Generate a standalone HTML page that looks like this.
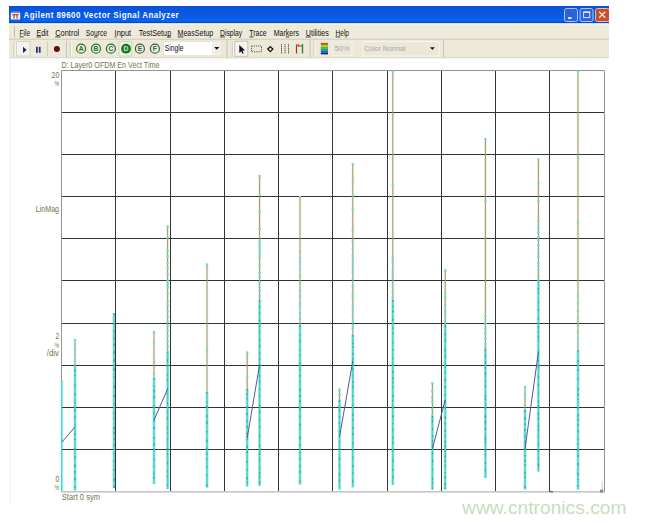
<!DOCTYPE html>
<html><head><meta charset="utf-8"><style>
html,body{margin:0;padding:0;background:#fff;width:646px;height:523px;overflow:hidden}
svg{display:block}
text{font-family:"Liberation Sans",sans-serif}
</style></head><body>
<svg width="646" height="523" viewBox="0 0 646 523">
<defs>
<linearGradient id="tb" x1="0" y1="0" x2="0" y2="1">
<stop offset="0" stop-color="#0b47c8"/>
<stop offset="0.1" stop-color="#0a54da"/>
<stop offset="0.5" stop-color="#0a58e0"/>
<stop offset="0.85" stop-color="#0a64f0"/>
<stop offset="1" stop-color="#0040b5"/>
</linearGradient>
</defs>
<rect x="0" y="0" width="646" height="523" fill="#fff"/>
<!-- title bar -->
<rect x="9" y="6" width="600" height="17.5" fill="url(#tb)"/>
<!-- app icon -->
<rect x="10.8" y="11.8" width="9.4" height="7.8" rx="1.2" fill="#f2ecec"/>
<rect x="10.8" y="11.8" width="9.4" height="1.2" fill="#6a8ad8"/>
<path d="M12.4 14 h6.2 v1.3 h-1 v3.2 h-1.2 v-3.2 h-1.8 v3.2 h-1.2 v-3.2 h-1z" fill="#b04a2c"/>
<text transform="translate(23.6,18.4) scale(0.83,1)" x="0" y="0" font-size="9.6" font-weight="bold" fill="#f4f8ff" letter-spacing="0.55">Agilent 89600 Vector Signal Analyzer</text>
<!-- caption buttons -->
<rect x="564.5" y="8.5" width="13" height="13" rx="2" fill="#2e62d6" stroke="#a8c4f8" stroke-width="1"/>
<rect x="568" y="17.2" width="3.6" height="1.7" fill="#f0f4ff"/>
<rect x="580" y="8.5" width="13" height="13" rx="2" fill="#2e62d6" stroke="#a8c4f8" stroke-width="1"/>
<rect x="583.6" y="12" width="6.2" height="5.6" fill="none" stroke="#e8eeff" stroke-width="0.9"/>
<rect x="583.4" y="11.6" width="6.6" height="1.3" fill="#e8eeff"/>
<rect x="595.5" y="8.5" width="14" height="13" rx="2" fill="#c84e2c" stroke="#e8b8a8" stroke-width="1"/>
<path d="M599.2 11.8 L605.3 17.8 M605.3 11.8 L599.2 17.8" stroke="#f4e8e4" stroke-width="1.3"/>
<rect x="609" y="6" width="37" height="20" fill="#fff"/>
<!-- menu bar -->
<rect x="9" y="23.5" width="600" height="16" fill="#eeeadb"/>
<rect x="9" y="23.5" width="600" height="1" fill="#f6f8f0"/>
<rect x="9" y="38.8" width="600" height="1" fill="#c8c4b0"/>
<rect x="14" y="26.5" width="1" height="11" fill="#c0bca8"/>
<g font-size="9.4" fill="#111"><text x="19.6" y="36" textLength="10.6" lengthAdjust="spacingAndGlyphs">File</text><rect x="19.60" y="36.5" width="4.02" height="0.9" fill="#333"/><text x="36.5" y="36" textLength="12" lengthAdjust="spacingAndGlyphs">Edit</text><rect x="36.50" y="36.5" width="4.64" height="0.9" fill="#333"/><text x="55.2" y="36" textLength="24" lengthAdjust="spacingAndGlyphs">Control</text><rect x="55.20" y="36.5" width="5.38" height="0.9" fill="#333"/><text x="85.8" y="36" textLength="21.3" lengthAdjust="spacingAndGlyphs">Source</text><rect x="94.02" y="36.5" width="3.74" height="0.9" fill="#333"/><text x="114.6" y="36" textLength="16.6" lengthAdjust="spacingAndGlyphs">Input</text><rect x="114.60" y="36.5" width="2.07" height="0.9" fill="#333"/><text x="138.8" y="36" textLength="32.4" lengthAdjust="spacingAndGlyphs">TestSetup</text><rect x="167.15" y="36.5" width="4.05" height="0.9" fill="#333"/><text x="177.6" y="36" textLength="35.6" lengthAdjust="spacingAndGlyphs">MeasSetup</text><rect x="177.60" y="36.5" width="5.86" height="0.9" fill="#333"/><text x="220" y="36" textLength="22.2" lengthAdjust="spacingAndGlyphs">Display</text><rect x="220.00" y="36.5" width="4.89" height="0.9" fill="#333"/><text x="249.3" y="36" textLength="17.4" lengthAdjust="spacingAndGlyphs">Trace</text><rect x="249.30" y="36.5" width="4.22" height="0.9" fill="#333"/><text x="273.7" y="36" textLength="25.4" lengthAdjust="spacingAndGlyphs">Markers</text><rect x="285.81" y="36.5" width="3.52" height="0.9" fill="#333"/><text x="305.8" y="36" textLength="23" lengthAdjust="spacingAndGlyphs">Utilities</text><rect x="305.80" y="36.5" width="5.15" height="0.9" fill="#333"/><text x="335.6" y="36" textLength="13.4" lengthAdjust="spacingAndGlyphs">Help</text><rect x="335.60" y="36.5" width="4.71" height="0.9" fill="#333"/></g>
<!-- toolbar band -->
<rect x="9" y="39.8" width="600" height="18.5" fill="#ece9d8"/>
<rect x="9" y="57.3" width="600" height="1" fill="#d8d4c4"/>
<!-- toolbar 1 -->
<rect x="13.5" y="41.5" width="1" height="15" fill="#c4c0ae"/>
<rect x="14.5" y="41.5" width="1" height="15" fill="#fbfaf4"/>
<rect x="16.5" y="41.5" width="13.5" height="14.5" fill="#f4f2ec" stroke="#d8d4c4" stroke-width="1"/>
<path d="M23 46.8 L26.7 49.9 L23 53 Z" fill="#1c2660"/>
<rect x="36" y="46.8" width="1.8" height="6" fill="#28307a"/>
<rect x="38.8" y="46.8" width="1.8" height="6" fill="#28307a"/>
<rect x="47" y="42" width="1" height="14" fill="#d0ccbc"/>
<circle cx="56.9" cy="49.1" r="3.0" fill="#5e0c0c"/>
<rect x="66" y="40.5" width="1" height="17" fill="#c8c4b2"/>
<!-- toolbar 2 -->
<rect x="69.8" y="41.5" width="1" height="15" fill="#c4c0ae"/>
<rect x="70.8" y="41.5" width="1" height="15" fill="#fbfaf4"/>
<g stroke="#2e6a2e" stroke-width="1.2" fill="#e4f0dc">
<circle cx="81.1" cy="48.7" r="4.5"/>
<circle cx="96" cy="48.7" r="4.5"/>
<circle cx="110.9" cy="48.7" r="4.5"/>
</g>
<rect x="118.8" y="41.5" width="12.6" height="14.5" fill="#e8f4e0" stroke="#d4d4c4" stroke-width="1"/>
<circle cx="126" cy="48.7" r="4.9" fill="#1a7424"/>
<g stroke="#3e5e3e" stroke-width="1.2" fill="#e6ece0">
<circle cx="139.9" cy="48.7" r="4.5"/>
<circle cx="154.9" cy="48.7" r="4.5"/>
</g>
<g font-size="6.8" font-weight="bold" text-anchor="middle">
<text x="81.1" y="51.2" fill="#2e6a2e">A</text>
<text x="96" y="51.2" fill="#2e6a2e">B</text>
<text x="110.9" y="51.2" fill="#2e6a2e">C</text>
<text x="126" y="51.2" fill="#c8ecc8">D</text>
<text x="139.9" y="51.2" fill="#3e5e3e">E</text>
<text x="154.9" y="51.2" fill="#3e5e3e">F</text>
</g>
<rect x="163.5" y="41.5" width="57.5" height="14" fill="#fff" stroke="#e8e6dc" stroke-width="1"/>
<rect x="212" y="42.5" width="8.5" height="12" fill="#f0eee4"/>
<text x="164.8" y="51.2" font-size="9" fill="#111" textLength="18.8" lengthAdjust="spacingAndGlyphs">Single</text>
<path d="M214.2 47 L219.4 47 L216.8 49.8 Z" fill="#111"/>
<rect x="226.5" y="40.5" width="1" height="17" fill="#c8c4b2"/>
<!-- toolbar 3 -->
<rect x="231.8" y="41.5" width="1" height="15" fill="#c4c0ae"/>
<rect x="232.8" y="41.5" width="1" height="15" fill="#fbfaf4"/>
<rect x="234.8" y="41.3" width="13" height="15" fill="#f6f4ee" stroke="#c8c4b4" stroke-width="1"/>
<path d="M239.3 45 L239.3 53 L241.2 51.2 L242.6 53.8 L243.8 53.2 L242.4 50.6 L245.2 50.4 Z" fill="#111"/>
<rect x="251.5" y="46" width="10" height="5.8" fill="none" stroke="#555" stroke-width="1" stroke-dasharray="1.2 1"/>
<path d="M270.3 46.6 L272.8 49.1 L270.3 51.6 L267.8 49.1 Z" fill="none" stroke="#111" stroke-width="1.3"/>
<g stroke="#444" stroke-width="1" stroke-dasharray="1.2 0.8">
<line x1="281.5" y1="44.2" x2="281.5" y2="53.5"/>
<line x1="285" y1="44.2" x2="285" y2="53.5"/>
<line x1="288.5" y1="44.2" x2="288.5" y2="53.5"/>
</g>
<path d="M296.5 53.5 V45 H299 V47" fill="none" stroke="#b03020" stroke-width="1.2"/>
<path d="M302.5 53.5 V45 L300.5 46.5" fill="none" stroke="#2a8a3a" stroke-width="1.4"/>
<rect x="309.5" y="40.5" width="1" height="17" fill="#c8c4b2"/>
<!-- toolbar 4 -->
<rect x="313.5" y="41.5" width="1" height="15" fill="#c4c0ae"/>
<rect x="314.5" y="41.5" width="1" height="15" fill="#fbfaf4"/>
<rect x="320.8" y="42.9" width="7.2" height="2" fill="#b05a20"/>
<rect x="320.8" y="44.9" width="7.2" height="2" fill="#c8c020"/>
<rect x="320.8" y="46.9" width="7.2" height="2" fill="#40c040"/>
<rect x="320.8" y="48.9" width="7.2" height="2" fill="#20a080"/>
<rect x="320.8" y="50.9" width="7.2" height="2" fill="#2060d0"/>
<rect x="320.8" y="52.9" width="7.2" height="1.5" fill="#102c80"/>
<rect x="332" y="42" width="20" height="13.5" fill="#ebe8da" stroke="#f4f2ea" stroke-width="1"/>
<text x="334.8" y="51.2" font-size="8" fill="#a8a69c" textLength="14.6" lengthAdjust="spacingAndGlyphs">50%</text>
<rect x="362.7" y="41.5" width="76.5" height="14.5" fill="#ebe8da" stroke="#f6f4ee" stroke-width="1"/>
<text x="364.3" y="51.2" font-size="8" fill="#a8a69c" textLength="41" lengthAdjust="spacingAndGlyphs">Color Normal</text>
<path d="M430 47.3 L434.7 47.3 L432.35 50 Z" fill="#111"/>
<rect x="443" y="40.5" width="1" height="17" fill="#c8c4b2"/>
<!-- white client -->
<rect x="9" y="58.3" width="600" height="465" fill="#fff"/>
<rect x="9.6" y="58.3" width="1" height="446" fill="#ebebeb"/>
<rect x="12.8" y="60" width="0.8" height="444" fill="#f3f3f3"/>
<rect x="10" y="58.4" width="598" height="0.8" fill="#eeeeee"/>

<!-- plot -->
<line x1="62" y1="380" x2="62" y2="491" stroke="#b0f2ee" stroke-width="2.6"/><line x1="75" y1="339" x2="75" y2="365" stroke="#f7f7e6" stroke-width="3"/><line x1="75" y1="365" x2="75" y2="490.5" stroke="#a6f0ec" stroke-width="3.2"/><line x1="114" y1="313" x2="114" y2="488" stroke="#a6f0ec" stroke-width="3.2"/><line x1="154" y1="331" x2="154" y2="378" stroke="#f7f7e6" stroke-width="3"/><line x1="154" y1="378" x2="154" y2="484" stroke="#a6f0ec" stroke-width="3.2"/><line x1="167.6" y1="225.5" x2="167.6" y2="250" stroke="#f7f7e6" stroke-width="3"/><line x1="167.6" y1="250" x2="167.6" y2="352" stroke="#f7f7e6" stroke-width="3"/><line x1="167.6" y1="352" x2="167.6" y2="489" stroke="#a6f0ec" stroke-width="3.2"/><line x1="207" y1="263.5" x2="207" y2="392" stroke="#f7f7e6" stroke-width="3"/><line x1="207" y1="392" x2="207" y2="487.5" stroke="#a6f0ec" stroke-width="3.2"/><line x1="247.2" y1="351.5" x2="247.2" y2="389" stroke="#f7f7e6" stroke-width="3"/><line x1="247.2" y1="389" x2="247.2" y2="486.5" stroke="#a6f0ec" stroke-width="3.2"/><line x1="259.6" y1="175" x2="259.6" y2="240" stroke="#f7f7e6" stroke-width="3"/><line x1="259.6" y1="240" x2="259.6" y2="300" stroke="#f7f7e6" stroke-width="3"/><line x1="259.6" y1="300" x2="259.6" y2="486" stroke="#a6f0ec" stroke-width="3.2"/><line x1="300" y1="196" x2="300" y2="250" stroke="#f7f7e6" stroke-width="3"/><line x1="300" y1="250" x2="300" y2="325" stroke="#f7f7e6" stroke-width="3"/><line x1="300" y1="325" x2="300" y2="484.5" stroke="#a6f0ec" stroke-width="3.2"/><line x1="339.5" y1="388.6" x2="339.5" y2="400" stroke="#f7f7e6" stroke-width="3"/><line x1="339.5" y1="400" x2="339.5" y2="489.5" stroke="#a6f0ec" stroke-width="3.2"/><line x1="352.8" y1="163" x2="352.8" y2="240" stroke="#f7f7e6" stroke-width="3"/><line x1="352.8" y1="240" x2="352.8" y2="335" stroke="#f7f7e6" stroke-width="3"/><line x1="352.8" y1="335" x2="352.8" y2="487.3" stroke="#a6f0ec" stroke-width="3.2"/><line x1="392.8" y1="70.5" x2="392.8" y2="258" stroke="#f7f7e6" stroke-width="3"/><line x1="392.8" y1="258" x2="392.8" y2="300" stroke="#f7f7e6" stroke-width="3"/><line x1="392.8" y1="300" x2="392.8" y2="485" stroke="#a6f0ec" stroke-width="3.2"/><line x1="432.4" y1="382" x2="432.4" y2="416" stroke="#f7f7e6" stroke-width="3"/><line x1="432.4" y1="416" x2="432.4" y2="489.6" stroke="#a6f0ec" stroke-width="3.2"/><line x1="445.2" y1="269.4" x2="445.2" y2="292" stroke="#f7f7e6" stroke-width="3"/><line x1="445.2" y1="292" x2="445.2" y2="325" stroke="#f7f7e6" stroke-width="3"/><line x1="445.2" y1="325" x2="445.2" y2="489.6" stroke="#a6f0ec" stroke-width="3.2"/><line x1="485.4" y1="138" x2="485.4" y2="315" stroke="#f7f7e6" stroke-width="3"/><line x1="485.4" y1="315" x2="485.4" y2="349" stroke="#f7f7e6" stroke-width="3"/><line x1="485.4" y1="349" x2="485.4" y2="478" stroke="#a6f0ec" stroke-width="3.2"/><line x1="525" y1="386" x2="525" y2="410" stroke="#f7f7e6" stroke-width="3"/><line x1="525" y1="410" x2="525" y2="489.5" stroke="#a6f0ec" stroke-width="3.2"/><line x1="538.4" y1="158.5" x2="538.4" y2="220" stroke="#f7f7e6" stroke-width="3"/><line x1="538.4" y1="220" x2="538.4" y2="280" stroke="#f7f7e6" stroke-width="3"/><line x1="538.4" y1="280" x2="538.4" y2="471.6" stroke="#a6f0ec" stroke-width="3.2"/><line x1="578" y1="70.5" x2="578" y2="302" stroke="#f7f7e6" stroke-width="3"/><line x1="578" y1="302" x2="578" y2="350" stroke="#f7f7e6" stroke-width="3"/><line x1="578" y1="350" x2="578" y2="489.5" stroke="#a6f0ec" stroke-width="3.2"/><g stroke="#343434" stroke-width="1"><line x1="115.5" y1="70.5" x2="115.5" y2="491.5"/><line x1="170.5" y1="70.5" x2="170.5" y2="491.5"/><line x1="224.5" y1="70.5" x2="224.5" y2="491.5"/><line x1="278.5" y1="70.5" x2="278.5" y2="491.5"/><line x1="332.5" y1="70.5" x2="332.5" y2="491.5"/><line x1="387.5" y1="70.5" x2="387.5" y2="491.5"/><line x1="441.5" y1="70.5" x2="441.5" y2="491.5"/><line x1="495.5" y1="70.5" x2="495.5" y2="491.5"/><line x1="549.5" y1="70.5" x2="549.5" y2="491.5"/><line x1="61.5" y1="112.5" x2="604.5" y2="112.5"/><line x1="61.5" y1="154.5" x2="604.5" y2="154.5"/><line x1="61.5" y1="196.5" x2="604.5" y2="196.5"/><line x1="61.5" y1="238.5" x2="604.5" y2="238.5"/><line x1="61.5" y1="280.5" x2="604.5" y2="280.5"/><line x1="61.5" y1="323.5" x2="604.5" y2="323.5"/><line x1="61.5" y1="365.5" x2="604.5" y2="365.5"/><line x1="61.5" y1="407.5" x2="604.5" y2="407.5"/><line x1="61.5" y1="449.5" x2="604.5" y2="449.5"/></g>
<path d="M61.5 491.5 V70.5 H604.5 V491.5" fill="none" stroke="#939393" stroke-width="1"/>
<rect x="61" y="491" width="544" height="1.6" fill="#c6c6c6"/>
<rect x="600" y="489.6" width="3.2" height="3" fill="#8a8a8a"/>
<rect x="601.8" y="481" width="0.8" height="9" fill="#c8c8c8"/>
<rect x="549" y="491" width="4" height="1.4" fill="#6a6a6a"/>
<line x1="61.6" y1="380" x2="61.6" y2="491" stroke="#48d2ca" stroke-width="1.2"/><line x1="75" y1="339" x2="75" y2="365" stroke="#9c9c72" stroke-width="1.1"/><rect x="73.9" y="339.0" width="2.2" height="2.2" fill="#6cdcd6"/><rect x="73.9" y="343.2" width="2.2" height="2.2" fill="#6cdcd6"/><rect x="73.9" y="348.9" width="2.2" height="2.2" fill="#6cdcd6"/><rect x="73.9" y="353.8" width="2.2" height="2.2" fill="#6cdcd6"/><rect x="73.9" y="359.8" width="2.2" height="2.2" fill="#6cdcd6"/><line x1="75" y1="365" x2="75" y2="490.5" stroke="#48d2ca" stroke-width="1.5"/><rect x="74.4" y="365.0" width="1.2" height="1.1" fill="#5c948a"/><rect x="74.4" y="369.1" width="1.2" height="2.3" fill="#5c948a"/><rect x="74.4" y="374.6" width="1.2" height="1.4" fill="#5c948a"/><rect x="74.4" y="384.6" width="1.2" height="1.7" fill="#5c948a"/><rect x="74.4" y="393.6" width="1.2" height="1.7" fill="#5c948a"/><rect x="74.4" y="401.5" width="1.2" height="1.2" fill="#5c948a"/><rect x="74.4" y="409.3" width="1.2" height="2.3" fill="#5c948a"/><rect x="74.4" y="416.4" width="1.2" height="2.1" fill="#5c948a"/><rect x="74.4" y="424.4" width="1.2" height="1.1" fill="#5c948a"/><rect x="74.4" y="433.0" width="1.2" height="1.9" fill="#5c948a"/><rect x="74.4" y="438.8" width="1.2" height="1.0" fill="#5c948a"/><rect x="74.4" y="448.0" width="1.2" height="1.7" fill="#5c948a"/><rect x="74.4" y="456.3" width="1.2" height="2.3" fill="#5c948a"/><rect x="74.4" y="464.6" width="1.2" height="2.4" fill="#5c948a"/><rect x="74.4" y="471.0" width="1.2" height="2.2" fill="#5c948a"/><rect x="74.4" y="477.6" width="1.2" height="2.4" fill="#5c948a"/><rect x="74.4" y="486.9" width="1.2" height="1.1" fill="#5c948a"/><line x1="114" y1="313" x2="114" y2="488" stroke="#48d2ca" stroke-width="1.5"/><rect x="113.4" y="313.0" width="1.2" height="1.3" fill="#5c948a"/><rect x="113.4" y="322.8" width="1.2" height="1.7" fill="#5c948a"/><rect x="113.4" y="330.6" width="1.2" height="1.5" fill="#5c948a"/><rect x="113.4" y="337.6" width="1.2" height="1.6" fill="#5c948a"/><rect x="113.4" y="343.7" width="1.2" height="1.9" fill="#5c948a"/><rect x="113.4" y="351.2" width="1.2" height="2.4" fill="#5c948a"/><rect x="113.4" y="359.3" width="1.2" height="2.4" fill="#5c948a"/><rect x="113.4" y="368.4" width="1.2" height="2.5" fill="#5c948a"/><rect x="113.4" y="376.5" width="1.2" height="1.2" fill="#5c948a"/><rect x="113.4" y="385.6" width="1.2" height="2.4" fill="#5c948a"/><rect x="113.4" y="395.1" width="1.2" height="1.9" fill="#5c948a"/><rect x="113.4" y="403.3" width="1.2" height="1.3" fill="#5c948a"/><rect x="113.4" y="412.3" width="1.2" height="1.9" fill="#5c948a"/><rect x="113.4" y="418.0" width="1.2" height="1.1" fill="#5c948a"/><rect x="113.4" y="427.2" width="1.2" height="2.5" fill="#5c948a"/><rect x="113.4" y="431.7" width="1.2" height="2.2" fill="#5c948a"/><rect x="113.4" y="438.2" width="1.2" height="1.2" fill="#5c948a"/><rect x="113.4" y="443.9" width="1.2" height="2.2" fill="#5c948a"/><rect x="113.4" y="453.2" width="1.2" height="1.1" fill="#5c948a"/><rect x="113.4" y="460.8" width="1.2" height="1.1" fill="#5c948a"/><rect x="113.4" y="469.2" width="1.2" height="1.5" fill="#5c948a"/><rect x="113.4" y="478.4" width="1.2" height="2.5" fill="#5c948a"/><rect x="113.4" y="485.5" width="1.2" height="2.5" fill="#5c948a"/><line x1="154" y1="331" x2="154" y2="378" stroke="#9c9c72" stroke-width="1.1"/><rect x="152.9" y="331.0" width="2.2" height="2.2" fill="#6cdcd6"/><rect x="152.9" y="342.2" width="2.2" height="2.2" fill="#6cdcd6"/><rect x="152.9" y="361.8" width="2.2" height="2.2" fill="#6cdcd6"/><rect x="152.9" y="372.3" width="2.2" height="2.2" fill="#6cdcd6"/><line x1="154" y1="378" x2="154" y2="484" stroke="#48d2ca" stroke-width="1.5"/><rect x="153.4" y="378.0" width="1.2" height="1.6" fill="#5c948a"/><rect x="153.4" y="385.7" width="1.2" height="1.2" fill="#5c948a"/><rect x="153.4" y="389.9" width="1.2" height="2.3" fill="#5c948a"/><rect x="153.4" y="395.8" width="1.2" height="2.4" fill="#5c948a"/><rect x="153.4" y="405.2" width="1.2" height="1.6" fill="#5c948a"/><rect x="153.4" y="411.9" width="1.2" height="1.8" fill="#5c948a"/><rect x="153.4" y="419.8" width="1.2" height="1.9" fill="#5c948a"/><rect x="153.4" y="427.2" width="1.2" height="1.9" fill="#5c948a"/><rect x="153.4" y="436.8" width="1.2" height="1.8" fill="#5c948a"/><rect x="153.4" y="443.4" width="1.2" height="2.1" fill="#5c948a"/><rect x="153.4" y="448.8" width="1.2" height="1.5" fill="#5c948a"/><rect x="153.4" y="458.7" width="1.2" height="1.8" fill="#5c948a"/><rect x="153.4" y="466.0" width="1.2" height="1.0" fill="#5c948a"/><rect x="153.4" y="472.5" width="1.2" height="1.9" fill="#5c948a"/><rect x="153.4" y="476.6" width="1.2" height="1.9" fill="#5c948a"/><line x1="167.6" y1="225.5" x2="167.6" y2="250" stroke="#9c9c72" stroke-width="1.1"/><rect x="166.5" y="225.5" width="2.2" height="2.2" fill="#6cdcd6"/><rect x="166.5" y="236.5" width="2.2" height="2.2" fill="#6cdcd6"/><line x1="167.6" y1="250" x2="167.6" y2="352" stroke="#9c9c72" stroke-width="1.1"/><rect x="166.5" y="250.0" width="2.2" height="2.2" fill="#6cdcd6"/><rect x="166.5" y="255.3" width="2.2" height="2.2" fill="#6cdcd6"/><rect x="166.5" y="261.7" width="2.2" height="2.2" fill="#6cdcd6"/><rect x="166.5" y="266.5" width="2.2" height="2.2" fill="#6cdcd6"/><rect x="166.5" y="273.0" width="2.2" height="2.2" fill="#6cdcd6"/><rect x="166.5" y="279.7" width="2.2" height="2.2" fill="#6cdcd6"/><rect x="166.5" y="282.8" width="2.2" height="2.2" fill="#6cdcd6"/><rect x="166.5" y="286.1" width="2.2" height="2.2" fill="#6cdcd6"/><rect x="166.5" y="292.5" width="2.2" height="2.2" fill="#6cdcd6"/><rect x="166.5" y="300.3" width="2.2" height="2.2" fill="#6cdcd6"/><rect x="166.5" y="304.6" width="2.2" height="2.2" fill="#6cdcd6"/><rect x="166.5" y="309.9" width="2.2" height="2.2" fill="#6cdcd6"/><rect x="166.5" y="315.8" width="2.2" height="2.2" fill="#6cdcd6"/><rect x="166.5" y="320.4" width="2.2" height="2.2" fill="#6cdcd6"/><rect x="166.5" y="325.2" width="2.2" height="2.2" fill="#6cdcd6"/><rect x="166.5" y="329.8" width="2.2" height="2.2" fill="#6cdcd6"/><rect x="166.5" y="334.7" width="2.2" height="2.2" fill="#6cdcd6"/><rect x="166.5" y="340.6" width="2.2" height="2.2" fill="#6cdcd6"/><rect x="166.5" y="345.1" width="2.2" height="2.2" fill="#6cdcd6"/><rect x="166.5" y="350.0" width="2.2" height="2.2" fill="#6cdcd6"/><line x1="167.6" y1="352" x2="167.6" y2="489" stroke="#48d2ca" stroke-width="1.5"/><rect x="167.0" y="352.0" width="1.2" height="1.0" fill="#5c948a"/><rect x="167.0" y="359.4" width="1.2" height="2.1" fill="#5c948a"/><rect x="167.0" y="365.3" width="1.2" height="1.3" fill="#5c948a"/><rect x="167.0" y="374.1" width="1.2" height="1.4" fill="#5c948a"/><rect x="167.0" y="379.2" width="1.2" height="1.7" fill="#5c948a"/><rect x="167.0" y="387.4" width="1.2" height="1.2" fill="#5c948a"/><rect x="167.0" y="393.3" width="1.2" height="1.5" fill="#5c948a"/><rect x="167.0" y="402.3" width="1.2" height="1.7" fill="#5c948a"/><rect x="167.0" y="411.5" width="1.2" height="1.3" fill="#5c948a"/><rect x="167.0" y="417.5" width="1.2" height="2.0" fill="#5c948a"/><rect x="167.0" y="426.8" width="1.2" height="1.7" fill="#5c948a"/><rect x="167.0" y="432.2" width="1.2" height="1.2" fill="#5c948a"/><rect x="167.0" y="439.3" width="1.2" height="1.3" fill="#5c948a"/><rect x="167.0" y="448.2" width="1.2" height="2.3" fill="#5c948a"/><rect x="167.0" y="453.3" width="1.2" height="1.4" fill="#5c948a"/><rect x="167.0" y="462.1" width="1.2" height="2.0" fill="#5c948a"/><rect x="167.0" y="471.0" width="1.2" height="1.5" fill="#5c948a"/><rect x="167.0" y="475.7" width="1.2" height="1.4" fill="#5c948a"/><rect x="167.0" y="484.5" width="1.2" height="1.4" fill="#5c948a"/><line x1="207" y1="263.5" x2="207" y2="392" stroke="#9c9c72" stroke-width="1.1"/><rect x="205.9" y="263.5" width="2.2" height="2.2" fill="#6cdcd6"/><rect x="205.9" y="348.5" width="2.2" height="2.2" fill="#6cdcd6"/><line x1="207" y1="392" x2="207" y2="487.5" stroke="#48d2ca" stroke-width="1.5"/><rect x="206.4" y="392.0" width="1.2" height="1.6" fill="#5c948a"/><rect x="206.4" y="401.5" width="1.2" height="1.2" fill="#5c948a"/><rect x="206.4" y="405.6" width="1.2" height="2.4" fill="#5c948a"/><rect x="206.4" y="414.8" width="1.2" height="2.5" fill="#5c948a"/><rect x="206.4" y="421.4" width="1.2" height="2.4" fill="#5c948a"/><rect x="206.4" y="431.0" width="1.2" height="1.3" fill="#5c948a"/><rect x="206.4" y="439.5" width="1.2" height="2.3" fill="#5c948a"/><rect x="206.4" y="447.5" width="1.2" height="1.8" fill="#5c948a"/><rect x="206.4" y="453.2" width="1.2" height="1.5" fill="#5c948a"/><rect x="206.4" y="458.6" width="1.2" height="1.1" fill="#5c948a"/><rect x="206.4" y="466.1" width="1.2" height="1.4" fill="#5c948a"/><rect x="206.4" y="474.9" width="1.2" height="1.1" fill="#5c948a"/><rect x="206.4" y="484.4" width="1.2" height="2.0" fill="#5c948a"/><line x1="247.2" y1="351.5" x2="247.2" y2="389" stroke="#9c9c72" stroke-width="1.1"/><rect x="246.1" y="351.5" width="2.2" height="2.2" fill="#6cdcd6"/><rect x="246.1" y="375.8" width="2.2" height="2.2" fill="#6cdcd6"/><line x1="247.2" y1="389" x2="247.2" y2="486.5" stroke="#48d2ca" stroke-width="1.5"/><rect x="246.6" y="389.0" width="1.2" height="1.9" fill="#5c948a"/><rect x="246.6" y="393.1" width="1.2" height="2.1" fill="#5c948a"/><rect x="246.6" y="398.1" width="1.2" height="1.4" fill="#5c948a"/><rect x="246.6" y="406.1" width="1.2" height="1.8" fill="#5c948a"/><rect x="246.6" y="412.6" width="1.2" height="2.4" fill="#5c948a"/><rect x="246.6" y="420.2" width="1.2" height="1.5" fill="#5c948a"/><rect x="246.6" y="425.8" width="1.2" height="2.3" fill="#5c948a"/><rect x="246.6" y="432.6" width="1.2" height="2.2" fill="#5c948a"/><rect x="246.6" y="438.7" width="1.2" height="1.3" fill="#5c948a"/><rect x="246.6" y="445.9" width="1.2" height="2.2" fill="#5c948a"/><rect x="246.6" y="451.0" width="1.2" height="2.2" fill="#5c948a"/><rect x="246.6" y="460.5" width="1.2" height="2.2" fill="#5c948a"/><rect x="246.6" y="469.4" width="1.2" height="1.0" fill="#5c948a"/><rect x="246.6" y="477.2" width="1.2" height="2.3" fill="#5c948a"/><rect x="246.6" y="481.5" width="1.2" height="1.4" fill="#5c948a"/><line x1="259.6" y1="175" x2="259.6" y2="240" stroke="#9c9c72" stroke-width="1.1"/><rect x="258.5" y="175.0" width="2.2" height="2.2" fill="#6cdcd6"/><rect x="258.5" y="193.4" width="2.2" height="2.2" fill="#6cdcd6"/><rect x="258.5" y="210.2" width="2.2" height="2.2" fill="#6cdcd6"/><rect x="258.5" y="227.8" width="2.2" height="2.2" fill="#6cdcd6"/><line x1="259.6" y1="240" x2="259.6" y2="300" stroke="#9c9c72" stroke-width="1.1"/><rect x="258.5" y="240.0" width="2.2" height="2.2" fill="#6cdcd6"/><rect x="258.5" y="243.0" width="2.2" height="2.2" fill="#6cdcd6"/><rect x="258.5" y="246.3" width="2.2" height="2.2" fill="#6cdcd6"/><rect x="258.5" y="249.9" width="2.2" height="2.2" fill="#6cdcd6"/><rect x="258.5" y="253.5" width="2.2" height="2.2" fill="#6cdcd6"/><rect x="258.5" y="256.9" width="2.2" height="2.2" fill="#6cdcd6"/><rect x="258.5" y="264.8" width="2.2" height="2.2" fill="#6cdcd6"/><rect x="258.5" y="272.0" width="2.2" height="2.2" fill="#6cdcd6"/><rect x="258.5" y="275.5" width="2.2" height="2.2" fill="#6cdcd6"/><rect x="258.5" y="281.0" width="2.2" height="2.2" fill="#6cdcd6"/><rect x="258.5" y="285.5" width="2.2" height="2.2" fill="#6cdcd6"/><rect x="258.5" y="290.1" width="2.2" height="2.2" fill="#6cdcd6"/><rect x="258.5" y="294.9" width="2.2" height="2.2" fill="#6cdcd6"/><line x1="259.6" y1="300" x2="259.6" y2="486" stroke="#48d2ca" stroke-width="1.5"/><rect x="259.0" y="300.0" width="1.2" height="1.9" fill="#5c948a"/><rect x="259.0" y="306.2" width="1.2" height="1.3" fill="#5c948a"/><rect x="259.0" y="312.1" width="1.2" height="1.2" fill="#5c948a"/><rect x="259.0" y="319.5" width="1.2" height="2.1" fill="#5c948a"/><rect x="259.0" y="325.8" width="1.2" height="1.1" fill="#5c948a"/><rect x="259.0" y="330.8" width="1.2" height="1.6" fill="#5c948a"/><rect x="259.0" y="338.5" width="1.2" height="2.2" fill="#5c948a"/><rect x="259.0" y="344.7" width="1.2" height="2.2" fill="#5c948a"/><rect x="259.0" y="352.5" width="1.2" height="1.6" fill="#5c948a"/><rect x="259.0" y="358.7" width="1.2" height="1.7" fill="#5c948a"/><rect x="259.0" y="366.9" width="1.2" height="1.6" fill="#5c948a"/><rect x="259.0" y="375.1" width="1.2" height="1.7" fill="#5c948a"/><rect x="259.0" y="380.6" width="1.2" height="1.8" fill="#5c948a"/><rect x="259.0" y="388.7" width="1.2" height="1.1" fill="#5c948a"/><rect x="259.0" y="395.3" width="1.2" height="1.6" fill="#5c948a"/><rect x="259.0" y="404.6" width="1.2" height="2.4" fill="#5c948a"/><rect x="259.0" y="410.8" width="1.2" height="2.3" fill="#5c948a"/><rect x="259.0" y="419.5" width="1.2" height="1.4" fill="#5c948a"/><rect x="259.0" y="426.3" width="1.2" height="1.2" fill="#5c948a"/><rect x="259.0" y="435.2" width="1.2" height="2.0" fill="#5c948a"/><rect x="259.0" y="444.5" width="1.2" height="2.2" fill="#5c948a"/><rect x="259.0" y="452.5" width="1.2" height="2.1" fill="#5c948a"/><rect x="259.0" y="459.9" width="1.2" height="1.2" fill="#5c948a"/><rect x="259.0" y="467.4" width="1.2" height="1.0" fill="#5c948a"/><rect x="259.0" y="472.3" width="1.2" height="2.2" fill="#5c948a"/><rect x="259.0" y="476.6" width="1.2" height="1.1" fill="#5c948a"/><rect x="259.0" y="481.2" width="1.2" height="2.3" fill="#5c948a"/><line x1="300" y1="196" x2="300" y2="250" stroke="#9c9c72" stroke-width="1.1"/><rect x="298.9" y="196.0" width="2.2" height="2.2" fill="#6cdcd6"/><line x1="300" y1="250" x2="300" y2="325" stroke="#9c9c72" stroke-width="1.1"/><rect x="298.9" y="250.0" width="2.2" height="2.2" fill="#6cdcd6"/><rect x="298.9" y="257.2" width="2.2" height="2.2" fill="#6cdcd6"/><rect x="298.9" y="260.8" width="2.2" height="2.2" fill="#6cdcd6"/><rect x="298.9" y="268.0" width="2.2" height="2.2" fill="#6cdcd6"/><rect x="298.9" y="274.4" width="2.2" height="2.2" fill="#6cdcd6"/><rect x="298.9" y="281.6" width="2.2" height="2.2" fill="#6cdcd6"/><rect x="298.9" y="289.3" width="2.2" height="2.2" fill="#6cdcd6"/><rect x="298.9" y="295.2" width="2.2" height="2.2" fill="#6cdcd6"/><rect x="298.9" y="302.2" width="2.2" height="2.2" fill="#6cdcd6"/><rect x="298.9" y="305.4" width="2.2" height="2.2" fill="#6cdcd6"/><rect x="298.9" y="312.3" width="2.2" height="2.2" fill="#6cdcd6"/><rect x="298.9" y="317.8" width="2.2" height="2.2" fill="#6cdcd6"/><rect x="298.9" y="324.4" width="2.2" height="2.2" fill="#6cdcd6"/><line x1="300" y1="325" x2="300" y2="484.5" stroke="#48d2ca" stroke-width="1.5"/><rect x="299.4" y="325.0" width="1.2" height="2.1" fill="#5c948a"/><rect x="299.4" y="334.6" width="1.2" height="1.1" fill="#5c948a"/><rect x="299.4" y="340.6" width="1.2" height="1.8" fill="#5c948a"/><rect x="299.4" y="349.5" width="1.2" height="1.4" fill="#5c948a"/><rect x="299.4" y="354.6" width="1.2" height="1.4" fill="#5c948a"/><rect x="299.4" y="362.3" width="1.2" height="2.1" fill="#5c948a"/><rect x="299.4" y="368.7" width="1.2" height="1.6" fill="#5c948a"/><rect x="299.4" y="375.0" width="1.2" height="1.5" fill="#5c948a"/><rect x="299.4" y="381.5" width="1.2" height="1.1" fill="#5c948a"/><rect x="299.4" y="388.5" width="1.2" height="2.5" fill="#5c948a"/><rect x="299.4" y="395.0" width="1.2" height="2.1" fill="#5c948a"/><rect x="299.4" y="400.0" width="1.2" height="2.0" fill="#5c948a"/><rect x="299.4" y="408.5" width="1.2" height="2.0" fill="#5c948a"/><rect x="299.4" y="415.6" width="1.2" height="1.7" fill="#5c948a"/><rect x="299.4" y="423.5" width="1.2" height="2.3" fill="#5c948a"/><rect x="299.4" y="428.4" width="1.2" height="1.1" fill="#5c948a"/><rect x="299.4" y="436.9" width="1.2" height="2.4" fill="#5c948a"/><rect x="299.4" y="444.0" width="1.2" height="1.7" fill="#5c948a"/><rect x="299.4" y="452.3" width="1.2" height="1.3" fill="#5c948a"/><rect x="299.4" y="457.9" width="1.2" height="1.3" fill="#5c948a"/><rect x="299.4" y="465.4" width="1.2" height="1.5" fill="#5c948a"/><rect x="299.4" y="470.8" width="1.2" height="2.0" fill="#5c948a"/><rect x="299.4" y="480.5" width="1.2" height="1.4" fill="#5c948a"/><line x1="339.5" y1="388.6" x2="339.5" y2="400" stroke="#9c9c72" stroke-width="1.1"/><rect x="338.4" y="388.6" width="2.2" height="2.2" fill="#6cdcd6"/><rect x="338.4" y="393.7" width="2.2" height="2.2" fill="#6cdcd6"/><line x1="339.5" y1="400" x2="339.5" y2="489.5" stroke="#48d2ca" stroke-width="1.5"/><rect x="338.9" y="400.0" width="1.2" height="1.9" fill="#5c948a"/><rect x="338.9" y="405.6" width="1.2" height="1.3" fill="#5c948a"/><rect x="338.9" y="409.7" width="1.2" height="1.7" fill="#5c948a"/><rect x="338.9" y="416.0" width="1.2" height="1.3" fill="#5c948a"/><rect x="338.9" y="422.2" width="1.2" height="1.5" fill="#5c948a"/><rect x="338.9" y="430.8" width="1.2" height="1.2" fill="#5c948a"/><rect x="338.9" y="440.8" width="1.2" height="1.7" fill="#5c948a"/><rect x="338.9" y="448.4" width="1.2" height="1.7" fill="#5c948a"/><rect x="338.9" y="457.4" width="1.2" height="2.2" fill="#5c948a"/><rect x="338.9" y="464.7" width="1.2" height="1.7" fill="#5c948a"/><rect x="338.9" y="473.1" width="1.2" height="2.3" fill="#5c948a"/><rect x="338.9" y="479.5" width="1.2" height="2.1" fill="#5c948a"/><line x1="352.8" y1="163" x2="352.8" y2="240" stroke="#9c9c72" stroke-width="1.1"/><rect x="351.7" y="163.0" width="2.2" height="2.2" fill="#6cdcd6"/><rect x="351.7" y="180.5" width="2.2" height="2.2" fill="#6cdcd6"/><rect x="351.7" y="194.2" width="2.2" height="2.2" fill="#6cdcd6"/><rect x="351.7" y="207.9" width="2.2" height="2.2" fill="#6cdcd6"/><rect x="351.7" y="229.4" width="2.2" height="2.2" fill="#6cdcd6"/><line x1="352.8" y1="240" x2="352.8" y2="335" stroke="#9c9c72" stroke-width="1.1"/><rect x="351.7" y="240.0" width="2.2" height="2.2" fill="#6cdcd6"/><rect x="351.7" y="247.8" width="2.2" height="2.2" fill="#6cdcd6"/><rect x="351.7" y="255.1" width="2.2" height="2.2" fill="#6cdcd6"/><rect x="351.7" y="259.3" width="2.2" height="2.2" fill="#6cdcd6"/><rect x="351.7" y="263.2" width="2.2" height="2.2" fill="#6cdcd6"/><rect x="351.7" y="267.5" width="2.2" height="2.2" fill="#6cdcd6"/><rect x="351.7" y="271.5" width="2.2" height="2.2" fill="#6cdcd6"/><rect x="351.7" y="278.0" width="2.2" height="2.2" fill="#6cdcd6"/><rect x="351.7" y="285.3" width="2.2" height="2.2" fill="#6cdcd6"/><rect x="351.7" y="292.8" width="2.2" height="2.2" fill="#6cdcd6"/><rect x="351.7" y="297.0" width="2.2" height="2.2" fill="#6cdcd6"/><rect x="351.7" y="304.4" width="2.2" height="2.2" fill="#6cdcd6"/><rect x="351.7" y="308.9" width="2.2" height="2.2" fill="#6cdcd6"/><rect x="351.7" y="314.1" width="2.2" height="2.2" fill="#6cdcd6"/><rect x="351.7" y="320.7" width="2.2" height="2.2" fill="#6cdcd6"/><rect x="351.7" y="324.1" width="2.2" height="2.2" fill="#6cdcd6"/><rect x="351.7" y="327.6" width="2.2" height="2.2" fill="#6cdcd6"/><rect x="351.7" y="334.8" width="2.2" height="2.2" fill="#6cdcd6"/><line x1="352.8" y1="335" x2="352.8" y2="487.3" stroke="#48d2ca" stroke-width="1.5"/><rect x="352.2" y="335.0" width="1.2" height="1.5" fill="#5c948a"/><rect x="352.2" y="342.5" width="1.2" height="2.0" fill="#5c948a"/><rect x="352.2" y="346.5" width="1.2" height="1.5" fill="#5c948a"/><rect x="352.2" y="353.1" width="1.2" height="1.7" fill="#5c948a"/><rect x="352.2" y="358.4" width="1.2" height="1.9" fill="#5c948a"/><rect x="352.2" y="368.1" width="1.2" height="1.6" fill="#5c948a"/><rect x="352.2" y="375.4" width="1.2" height="1.2" fill="#5c948a"/><rect x="352.2" y="381.0" width="1.2" height="2.0" fill="#5c948a"/><rect x="352.2" y="385.7" width="1.2" height="2.3" fill="#5c948a"/><rect x="352.2" y="395.2" width="1.2" height="1.1" fill="#5c948a"/><rect x="352.2" y="404.8" width="1.2" height="1.6" fill="#5c948a"/><rect x="352.2" y="413.5" width="1.2" height="2.1" fill="#5c948a"/><rect x="352.2" y="419.2" width="1.2" height="2.0" fill="#5c948a"/><rect x="352.2" y="427.2" width="1.2" height="2.2" fill="#5c948a"/><rect x="352.2" y="432.7" width="1.2" height="2.1" fill="#5c948a"/><rect x="352.2" y="442.5" width="1.2" height="2.0" fill="#5c948a"/><rect x="352.2" y="449.7" width="1.2" height="1.2" fill="#5c948a"/><rect x="352.2" y="456.7" width="1.2" height="1.5" fill="#5c948a"/><rect x="352.2" y="465.0" width="1.2" height="2.0" fill="#5c948a"/><rect x="352.2" y="472.4" width="1.2" height="1.3" fill="#5c948a"/><rect x="352.2" y="480.3" width="1.2" height="1.9" fill="#5c948a"/><line x1="392.8" y1="70.5" x2="392.8" y2="258" stroke="#9c9c72" stroke-width="1.1"/><rect x="391.7" y="70.5" width="2.2" height="2.2" fill="#6cdcd6"/><rect x="391.7" y="183.9" width="2.2" height="2.2" fill="#6cdcd6"/><line x1="392.8" y1="258" x2="392.8" y2="300" stroke="#9c9c72" stroke-width="1.1"/><rect x="391.7" y="258.0" width="2.2" height="2.2" fill="#6cdcd6"/><rect x="391.7" y="261.6" width="2.2" height="2.2" fill="#6cdcd6"/><rect x="391.7" y="269.3" width="2.2" height="2.2" fill="#6cdcd6"/><rect x="391.7" y="273.0" width="2.2" height="2.2" fill="#6cdcd6"/><rect x="391.7" y="277.6" width="2.2" height="2.2" fill="#6cdcd6"/><rect x="391.7" y="284.2" width="2.2" height="2.2" fill="#6cdcd6"/><rect x="391.7" y="290.2" width="2.2" height="2.2" fill="#6cdcd6"/><rect x="391.7" y="296.0" width="2.2" height="2.2" fill="#6cdcd6"/><line x1="392.8" y1="300" x2="392.8" y2="485" stroke="#48d2ca" stroke-width="1.5"/><rect x="392.2" y="300.0" width="1.2" height="1.7" fill="#5c948a"/><rect x="392.2" y="305.9" width="1.2" height="1.3" fill="#5c948a"/><rect x="392.2" y="310.3" width="1.2" height="2.1" fill="#5c948a"/><rect x="392.2" y="318.8" width="1.2" height="1.8" fill="#5c948a"/><rect x="392.2" y="327.3" width="1.2" height="1.5" fill="#5c948a"/><rect x="392.2" y="332.8" width="1.2" height="1.6" fill="#5c948a"/><rect x="392.2" y="342.1" width="1.2" height="1.1" fill="#5c948a"/><rect x="392.2" y="349.1" width="1.2" height="1.4" fill="#5c948a"/><rect x="392.2" y="357.7" width="1.2" height="1.5" fill="#5c948a"/><rect x="392.2" y="363.7" width="1.2" height="1.6" fill="#5c948a"/><rect x="392.2" y="371.0" width="1.2" height="2.2" fill="#5c948a"/><rect x="392.2" y="377.1" width="1.2" height="2.3" fill="#5c948a"/><rect x="392.2" y="381.8" width="1.2" height="1.4" fill="#5c948a"/><rect x="392.2" y="386.4" width="1.2" height="1.2" fill="#5c948a"/><rect x="392.2" y="395.0" width="1.2" height="2.1" fill="#5c948a"/><rect x="392.2" y="400.1" width="1.2" height="1.3" fill="#5c948a"/><rect x="392.2" y="406.6" width="1.2" height="2.1" fill="#5c948a"/><rect x="392.2" y="415.5" width="1.2" height="2.1" fill="#5c948a"/><rect x="392.2" y="423.1" width="1.2" height="1.2" fill="#5c948a"/><rect x="392.2" y="429.5" width="1.2" height="1.3" fill="#5c948a"/><rect x="392.2" y="436.6" width="1.2" height="1.9" fill="#5c948a"/><rect x="392.2" y="441.9" width="1.2" height="1.4" fill="#5c948a"/><rect x="392.2" y="450.5" width="1.2" height="1.0" fill="#5c948a"/><rect x="392.2" y="459.4" width="1.2" height="2.3" fill="#5c948a"/><rect x="392.2" y="469.1" width="1.2" height="1.6" fill="#5c948a"/><rect x="392.2" y="476.4" width="1.2" height="1.9" fill="#5c948a"/><line x1="432.4" y1="382" x2="432.4" y2="416" stroke="#9c9c72" stroke-width="1.1"/><rect x="431.29999999999995" y="382.0" width="2.2" height="2.2" fill="#6cdcd6"/><rect x="431.29999999999995" y="389.9" width="2.2" height="2.2" fill="#6cdcd6"/><rect x="431.29999999999995" y="396.3" width="2.2" height="2.2" fill="#6cdcd6"/><rect x="431.29999999999995" y="400.8" width="2.2" height="2.2" fill="#6cdcd6"/><rect x="431.29999999999995" y="408.1" width="2.2" height="2.2" fill="#6cdcd6"/><rect x="431.29999999999995" y="413.5" width="2.2" height="2.2" fill="#6cdcd6"/><line x1="432.4" y1="416" x2="432.4" y2="489.6" stroke="#48d2ca" stroke-width="1.5"/><rect x="431.79999999999995" y="416.0" width="1.2" height="2.1" fill="#5c948a"/><rect x="431.79999999999995" y="420.0" width="1.2" height="2.2" fill="#5c948a"/><rect x="431.79999999999995" y="428.0" width="1.2" height="1.7" fill="#5c948a"/><rect x="431.79999999999995" y="435.1" width="1.2" height="1.7" fill="#5c948a"/><rect x="431.79999999999995" y="440.3" width="1.2" height="1.8" fill="#5c948a"/><rect x="431.79999999999995" y="444.5" width="1.2" height="1.8" fill="#5c948a"/><rect x="431.79999999999995" y="452.4" width="1.2" height="1.7" fill="#5c948a"/><rect x="431.79999999999995" y="459.8" width="1.2" height="2.4" fill="#5c948a"/><rect x="431.79999999999995" y="469.1" width="1.2" height="1.2" fill="#5c948a"/><rect x="431.79999999999995" y="477.9" width="1.2" height="1.9" fill="#5c948a"/><rect x="431.79999999999995" y="482.2" width="1.2" height="1.5" fill="#5c948a"/><rect x="431.79999999999995" y="487.6" width="1.2" height="1.1" fill="#5c948a"/><line x1="445.2" y1="269.4" x2="445.2" y2="292" stroke="#9c9c72" stroke-width="1.1"/><rect x="444.09999999999997" y="269.4" width="2.2" height="2.2" fill="#6cdcd6"/><line x1="445.2" y1="292" x2="445.2" y2="325" stroke="#9c9c72" stroke-width="1.1"/><rect x="444.09999999999997" y="292.0" width="2.2" height="2.2" fill="#6cdcd6"/><rect x="444.09999999999997" y="296.6" width="2.2" height="2.2" fill="#6cdcd6"/><rect x="444.09999999999997" y="304.0" width="2.2" height="2.2" fill="#6cdcd6"/><rect x="444.09999999999997" y="310.4" width="2.2" height="2.2" fill="#6cdcd6"/><rect x="444.09999999999997" y="314.1" width="2.2" height="2.2" fill="#6cdcd6"/><rect x="444.09999999999997" y="321.4" width="2.2" height="2.2" fill="#6cdcd6"/><line x1="445.2" y1="325" x2="445.2" y2="489.6" stroke="#48d2ca" stroke-width="1.5"/><rect x="444.59999999999997" y="325.0" width="1.2" height="2.4" fill="#5c948a"/><rect x="444.59999999999997" y="333.3" width="1.2" height="2.1" fill="#5c948a"/><rect x="444.59999999999997" y="339.4" width="1.2" height="2.2" fill="#5c948a"/><rect x="444.59999999999997" y="348.9" width="1.2" height="2.3" fill="#5c948a"/><rect x="444.59999999999997" y="355.6" width="1.2" height="2.1" fill="#5c948a"/><rect x="444.59999999999997" y="362.5" width="1.2" height="1.2" fill="#5c948a"/><rect x="444.59999999999997" y="366.7" width="1.2" height="1.1" fill="#5c948a"/><rect x="444.59999999999997" y="371.9" width="1.2" height="1.2" fill="#5c948a"/><rect x="444.59999999999997" y="378.9" width="1.2" height="2.0" fill="#5c948a"/><rect x="444.59999999999997" y="386.1" width="1.2" height="1.6" fill="#5c948a"/><rect x="444.59999999999997" y="394.0" width="1.2" height="1.5" fill="#5c948a"/><rect x="444.59999999999997" y="400.8" width="1.2" height="2.1" fill="#5c948a"/><rect x="444.59999999999997" y="407.2" width="1.2" height="1.3" fill="#5c948a"/><rect x="444.59999999999997" y="416.6" width="1.2" height="2.1" fill="#5c948a"/><rect x="444.59999999999997" y="422.8" width="1.2" height="1.6" fill="#5c948a"/><rect x="444.59999999999997" y="430.0" width="1.2" height="1.9" fill="#5c948a"/><rect x="444.59999999999997" y="435.4" width="1.2" height="1.0" fill="#5c948a"/><rect x="444.59999999999997" y="440.6" width="1.2" height="2.2" fill="#5c948a"/><rect x="444.59999999999997" y="445.5" width="1.2" height="1.7" fill="#5c948a"/><rect x="444.59999999999997" y="450.6" width="1.2" height="1.3" fill="#5c948a"/><rect x="444.59999999999997" y="455.7" width="1.2" height="1.6" fill="#5c948a"/><rect x="444.59999999999997" y="460.7" width="1.2" height="1.0" fill="#5c948a"/><rect x="444.59999999999997" y="465.3" width="1.2" height="1.3" fill="#5c948a"/><rect x="444.59999999999997" y="472.3" width="1.2" height="1.1" fill="#5c948a"/><rect x="444.59999999999997" y="476.4" width="1.2" height="1.7" fill="#5c948a"/><rect x="444.59999999999997" y="482.9" width="1.2" height="2.1" fill="#5c948a"/><rect x="444.59999999999997" y="487.2" width="1.2" height="1.6" fill="#5c948a"/><line x1="485.4" y1="138" x2="485.4" y2="315" stroke="#9c9c72" stroke-width="1.1"/><rect x="484.29999999999995" y="138.0" width="2.2" height="2.2" fill="#6cdcd6"/><rect x="484.29999999999995" y="199.6" width="2.2" height="2.2" fill="#6cdcd6"/><line x1="485.4" y1="315" x2="485.4" y2="349" stroke="#9c9c72" stroke-width="1.1"/><rect x="484.29999999999995" y="315.0" width="2.2" height="2.2" fill="#6cdcd6"/><rect x="484.29999999999995" y="319.1" width="2.2" height="2.2" fill="#6cdcd6"/><rect x="484.29999999999995" y="322.6" width="2.2" height="2.2" fill="#6cdcd6"/><rect x="484.29999999999995" y="327.9" width="2.2" height="2.2" fill="#6cdcd6"/><rect x="484.29999999999995" y="331.8" width="2.2" height="2.2" fill="#6cdcd6"/><rect x="484.29999999999995" y="337.9" width="2.2" height="2.2" fill="#6cdcd6"/><rect x="484.29999999999995" y="342.6" width="2.2" height="2.2" fill="#6cdcd6"/><rect x="484.29999999999995" y="346.2" width="2.2" height="2.2" fill="#6cdcd6"/><line x1="485.4" y1="349" x2="485.4" y2="478" stroke="#48d2ca" stroke-width="1.5"/><rect x="484.79999999999995" y="349.0" width="1.2" height="2.1" fill="#5c948a"/><rect x="484.79999999999995" y="354.7" width="1.2" height="2.2" fill="#5c948a"/><rect x="484.79999999999995" y="361.4" width="1.2" height="2.4" fill="#5c948a"/><rect x="484.79999999999995" y="367.2" width="1.2" height="1.4" fill="#5c948a"/><rect x="484.79999999999995" y="372.8" width="1.2" height="2.2" fill="#5c948a"/><rect x="484.79999999999995" y="380.6" width="1.2" height="1.5" fill="#5c948a"/><rect x="484.79999999999995" y="385.2" width="1.2" height="2.0" fill="#5c948a"/><rect x="484.79999999999995" y="395.0" width="1.2" height="1.9" fill="#5c948a"/><rect x="484.79999999999995" y="399.0" width="1.2" height="1.0" fill="#5c948a"/><rect x="484.79999999999995" y="403.6" width="1.2" height="1.3" fill="#5c948a"/><rect x="484.79999999999995" y="407.8" width="1.2" height="1.1" fill="#5c948a"/><rect x="484.79999999999995" y="415.7" width="1.2" height="2.4" fill="#5c948a"/><rect x="484.79999999999995" y="420.9" width="1.2" height="2.5" fill="#5c948a"/><rect x="484.79999999999995" y="427.8" width="1.2" height="2.2" fill="#5c948a"/><rect x="484.79999999999995" y="437.3" width="1.2" height="2.4" fill="#5c948a"/><rect x="484.79999999999995" y="441.5" width="1.2" height="1.5" fill="#5c948a"/><rect x="484.79999999999995" y="449.1" width="1.2" height="2.4" fill="#5c948a"/><rect x="484.79999999999995" y="453.6" width="1.2" height="1.4" fill="#5c948a"/><rect x="484.79999999999995" y="462.7" width="1.2" height="1.2" fill="#5c948a"/><rect x="484.79999999999995" y="469.1" width="1.2" height="1.5" fill="#5c948a"/><line x1="525" y1="386" x2="525" y2="410" stroke="#9c9c72" stroke-width="1.1"/><rect x="523.9" y="386.0" width="2.2" height="2.2" fill="#6cdcd6"/><rect x="523.9" y="393.6" width="2.2" height="2.2" fill="#6cdcd6"/><rect x="523.9" y="397.5" width="2.2" height="2.2" fill="#6cdcd6"/><rect x="523.9" y="404.2" width="2.2" height="2.2" fill="#6cdcd6"/><line x1="525" y1="410" x2="525" y2="489.5" stroke="#48d2ca" stroke-width="1.5"/><rect x="524.4" y="410.0" width="1.2" height="2.3" fill="#5c948a"/><rect x="524.4" y="417.3" width="1.2" height="2.4" fill="#5c948a"/><rect x="524.4" y="423.5" width="1.2" height="1.6" fill="#5c948a"/><rect x="524.4" y="428.9" width="1.2" height="2.2" fill="#5c948a"/><rect x="524.4" y="435.8" width="1.2" height="1.4" fill="#5c948a"/><rect x="524.4" y="440.8" width="1.2" height="2.1" fill="#5c948a"/><rect x="524.4" y="448.4" width="1.2" height="2.1" fill="#5c948a"/><rect x="524.4" y="454.7" width="1.2" height="1.7" fill="#5c948a"/><rect x="524.4" y="459.7" width="1.2" height="2.1" fill="#5c948a"/><rect x="524.4" y="463.8" width="1.2" height="1.7" fill="#5c948a"/><rect x="524.4" y="472.3" width="1.2" height="2.0" fill="#5c948a"/><rect x="524.4" y="476.9" width="1.2" height="1.4" fill="#5c948a"/><rect x="524.4" y="486.0" width="1.2" height="2.0" fill="#5c948a"/><line x1="538.4" y1="158.5" x2="538.4" y2="220" stroke="#9c9c72" stroke-width="1.1"/><rect x="537.3" y="158.5" width="2.2" height="2.2" fill="#6cdcd6"/><rect x="537.3" y="182.5" width="2.2" height="2.2" fill="#6cdcd6"/><rect x="537.3" y="199.7" width="2.2" height="2.2" fill="#6cdcd6"/><line x1="538.4" y1="220" x2="538.4" y2="280" stroke="#9c9c72" stroke-width="1.1"/><rect x="537.3" y="220.0" width="2.2" height="2.2" fill="#6cdcd6"/><rect x="537.3" y="226.7" width="2.2" height="2.2" fill="#6cdcd6"/><rect x="537.3" y="231.3" width="2.2" height="2.2" fill="#6cdcd6"/><rect x="537.3" y="236.2" width="2.2" height="2.2" fill="#6cdcd6"/><rect x="537.3" y="239.5" width="2.2" height="2.2" fill="#6cdcd6"/><rect x="537.3" y="244.5" width="2.2" height="2.2" fill="#6cdcd6"/><rect x="537.3" y="252.3" width="2.2" height="2.2" fill="#6cdcd6"/><rect x="537.3" y="255.8" width="2.2" height="2.2" fill="#6cdcd6"/><rect x="537.3" y="261.7" width="2.2" height="2.2" fill="#6cdcd6"/><rect x="537.3" y="265.2" width="2.2" height="2.2" fill="#6cdcd6"/><rect x="537.3" y="268.6" width="2.2" height="2.2" fill="#6cdcd6"/><rect x="537.3" y="274.9" width="2.2" height="2.2" fill="#6cdcd6"/><rect x="537.3" y="279.1" width="2.2" height="2.2" fill="#6cdcd6"/><line x1="538.4" y1="280" x2="538.4" y2="471.6" stroke="#48d2ca" stroke-width="1.5"/><rect x="537.8" y="280.0" width="1.2" height="1.2" fill="#5c948a"/><rect x="537.8" y="287.9" width="1.2" height="1.9" fill="#5c948a"/><rect x="537.8" y="291.9" width="1.2" height="1.3" fill="#5c948a"/><rect x="537.8" y="301.7" width="1.2" height="1.3" fill="#5c948a"/><rect x="537.8" y="309.1" width="1.2" height="1.6" fill="#5c948a"/><rect x="537.8" y="317.8" width="1.2" height="1.9" fill="#5c948a"/><rect x="537.8" y="326.5" width="1.2" height="1.8" fill="#5c948a"/><rect x="537.8" y="331.7" width="1.2" height="1.3" fill="#5c948a"/><rect x="537.8" y="336.1" width="1.2" height="2.2" fill="#5c948a"/><rect x="537.8" y="340.8" width="1.2" height="1.0" fill="#5c948a"/><rect x="537.8" y="350.6" width="1.2" height="1.3" fill="#5c948a"/><rect x="537.8" y="360.0" width="1.2" height="1.1" fill="#5c948a"/><rect x="537.8" y="366.8" width="1.2" height="1.3" fill="#5c948a"/><rect x="537.8" y="375.7" width="1.2" height="1.9" fill="#5c948a"/><rect x="537.8" y="383.6" width="1.2" height="2.1" fill="#5c948a"/><rect x="537.8" y="392.8" width="1.2" height="1.5" fill="#5c948a"/><rect x="537.8" y="400.4" width="1.2" height="1.7" fill="#5c948a"/><rect x="537.8" y="405.1" width="1.2" height="2.3" fill="#5c948a"/><rect x="537.8" y="412.7" width="1.2" height="2.2" fill="#5c948a"/><rect x="537.8" y="417.9" width="1.2" height="1.8" fill="#5c948a"/><rect x="537.8" y="424.7" width="1.2" height="2.1" fill="#5c948a"/><rect x="537.8" y="429.2" width="1.2" height="1.5" fill="#5c948a"/><rect x="537.8" y="436.1" width="1.2" height="1.1" fill="#5c948a"/><rect x="537.8" y="443.4" width="1.2" height="2.1" fill="#5c948a"/><rect x="537.8" y="449.9" width="1.2" height="2.0" fill="#5c948a"/><rect x="537.8" y="457.6" width="1.2" height="1.3" fill="#5c948a"/><rect x="537.8" y="463.7" width="1.2" height="2.5" fill="#5c948a"/><line x1="578" y1="70.5" x2="578" y2="302" stroke="#9c9c72" stroke-width="1.1"/><rect x="576.9" y="70.5" width="2.2" height="2.2" fill="#6cdcd6"/><rect x="576.9" y="156.3" width="2.2" height="2.2" fill="#6cdcd6"/><rect x="576.9" y="221.4" width="2.2" height="2.2" fill="#6cdcd6"/><rect x="576.9" y="294.5" width="2.2" height="2.2" fill="#6cdcd6"/><line x1="578" y1="302" x2="578" y2="350" stroke="#9c9c72" stroke-width="1.1"/><rect x="576.9" y="302.0" width="2.2" height="2.2" fill="#6cdcd6"/><rect x="576.9" y="309.7" width="2.2" height="2.2" fill="#6cdcd6"/><rect x="576.9" y="316.3" width="2.2" height="2.2" fill="#6cdcd6"/><rect x="576.9" y="323.7" width="2.2" height="2.2" fill="#6cdcd6"/><rect x="576.9" y="331.6" width="2.2" height="2.2" fill="#6cdcd6"/><rect x="576.9" y="337.7" width="2.2" height="2.2" fill="#6cdcd6"/><rect x="576.9" y="345.3" width="2.2" height="2.2" fill="#6cdcd6"/><line x1="578" y1="350" x2="578" y2="489.5" stroke="#48d2ca" stroke-width="1.5"/><rect x="577.4" y="350.0" width="1.2" height="1.6" fill="#5c948a"/><rect x="577.4" y="359.7" width="1.2" height="2.4" fill="#5c948a"/><rect x="577.4" y="369.4" width="1.2" height="1.7" fill="#5c948a"/><rect x="577.4" y="378.0" width="1.2" height="1.6" fill="#5c948a"/><rect x="577.4" y="388.0" width="1.2" height="2.4" fill="#5c948a"/><rect x="577.4" y="393.8" width="1.2" height="2.4" fill="#5c948a"/><rect x="577.4" y="398.9" width="1.2" height="1.1" fill="#5c948a"/><rect x="577.4" y="407.2" width="1.2" height="1.4" fill="#5c948a"/><rect x="577.4" y="414.3" width="1.2" height="2.0" fill="#5c948a"/><rect x="577.4" y="418.6" width="1.2" height="2.1" fill="#5c948a"/><rect x="577.4" y="424.2" width="1.2" height="1.6" fill="#5c948a"/><rect x="577.4" y="430.3" width="1.2" height="2.1" fill="#5c948a"/><rect x="577.4" y="438.8" width="1.2" height="1.4" fill="#5c948a"/><rect x="577.4" y="443.4" width="1.2" height="1.4" fill="#5c948a"/><rect x="577.4" y="449.9" width="1.2" height="1.1" fill="#5c948a"/><rect x="577.4" y="454.8" width="1.2" height="2.1" fill="#5c948a"/><rect x="577.4" y="463.0" width="1.2" height="2.5" fill="#5c948a"/><rect x="577.4" y="472.9" width="1.2" height="2.3" fill="#5c948a"/><rect x="577.4" y="479.1" width="1.2" height="1.2" fill="#5c948a"/><rect x="577.4" y="485.0" width="1.2" height="1.7" fill="#5c948a"/><line x1="62" y1="442" x2="75" y2="427" stroke="#56569c" stroke-width="1"/><line x1="154" y1="420" x2="167.6" y2="389" stroke="#56569c" stroke-width="1"/><line x1="247.2" y1="438" x2="259.6" y2="364.5" stroke="#56569c" stroke-width="1"/><line x1="339.5" y1="437" x2="352.8" y2="361" stroke="#56569c" stroke-width="1"/><line x1="432.4" y1="448.8" x2="445.2" y2="400" stroke="#56569c" stroke-width="1"/><line x1="525" y1="448.8" x2="538.4" y2="352" stroke="#56569c" stroke-width="1"/>
<g fill="#74744a">
<text x="61.4" y="68.4" font-size="8.6" textLength="98" lengthAdjust="spacingAndGlyphs">D: Layer0 OFDM En Vect Time</text>
<text x="51.6" y="77.5" font-size="8.8" textLength="7.6" lengthAdjust="spacingAndGlyphs">20</text>
<text x="54.5" y="85.8" font-size="7.2" textLength="4.6" lengthAdjust="spacingAndGlyphs">%</text>
<text x="55.4" y="338.8" font-size="8.4" textLength="3.6" lengthAdjust="spacingAndGlyphs">2</text>
<text x="54.4" y="347.7" font-size="7.2" textLength="4.6" lengthAdjust="spacingAndGlyphs">%</text>
<text x="46.8" y="355.9" font-size="8.4" textLength="12" lengthAdjust="spacingAndGlyphs">/div</text>
<text x="35.7" y="211.7" font-size="8.4" textLength="23.4" lengthAdjust="spacingAndGlyphs">LinMag</text>
<text x="55.4" y="481.8" font-size="8.4" textLength="3.8" lengthAdjust="spacingAndGlyphs">0</text>
<text x="54.6" y="490" font-size="7.2" textLength="4.6" lengthAdjust="spacingAndGlyphs">%</text>
<text x="61.8" y="500.3" font-size="8.4" textLength="38.2" lengthAdjust="spacingAndGlyphs">Start  0  sym</text>
</g>
<!-- watermark -->
<text x="462" y="513.9" font-size="19" fill="#c8ddbc" textLength="164.5" lengthAdjust="spacingAndGlyphs">www.cntronics.com</text>
</svg>
</body></html>
